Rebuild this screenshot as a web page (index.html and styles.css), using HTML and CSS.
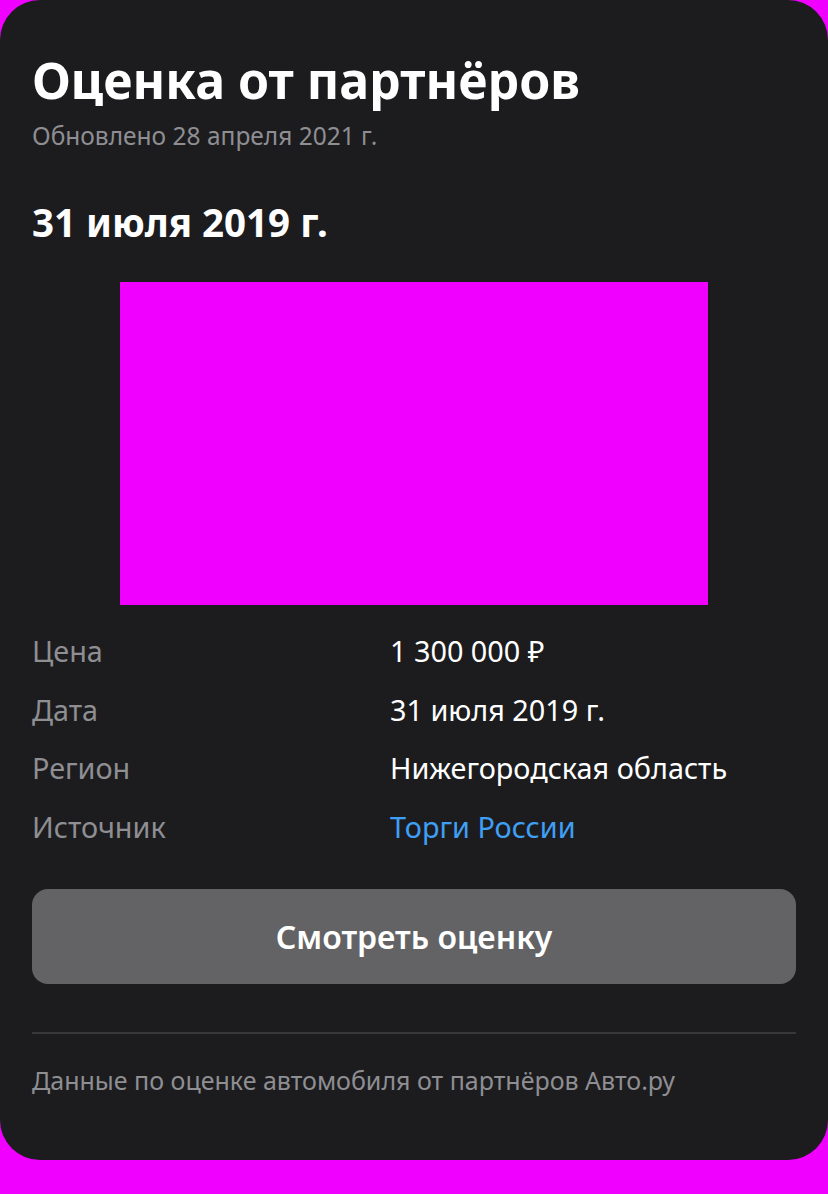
FILE: index.html
```html
<!DOCTYPE html>
<html lang="ru">
<head>
<meta charset="utf-8">
<link rel="stylesheet" href="styles.css">
</head>
<body>
<div class="card">
  <h1 class="title">Оценка от партнёров</h1>
  <div class="updated">Обновлено 28 апреля 2021 г.</div>
  <h2 class="date">31 июля 2019 г.</h2>
  <div class="picture-wrap"><div class="picture"></div></div>
  <div class="rows">
    <div class="row"><span class="label">Цена</span><span class="value">1 300 000 ₽</span></div>
    <div class="row"><span class="label">Дата</span><span class="value">31 июля 2019 г.</span></div>
    <div class="row"><span class="label">Регион</span><span class="value">Нижегородская область</span></div>
    <div class="row"><span class="label">Источник</span><span class="value link">Торги России</span></div>
  </div>
  <button class="btn">Смотреть оценку</button>
  <div class="divider"></div>
  <div class="footer">Данные по оценке автомобиля от партнёров Авто.ру</div>
</div>
</body>
</html>
```
FILE: styles.css
```css
html, body {
  margin: 0;
  padding: 0;
  background: #f000ff;
}
body {
  font-family: "Noto Sans", "Open Sans", sans-serif;
  width: 828px;
  height: 1194px;
}
.card {
  background: #1c1c1e;
  border-radius: 40px;
  height: 1160px;
  box-sizing: border-box;
  padding: 46px 32px 0 32px;
  color: #fff;
}
.title {
  margin: 0;
  font-size: 50px;
  font-weight: 700;
  line-height: 68px;
}
.updated {
  margin-top: 6px;
  font-size: 24.5px;
  line-height: 32px;
  color: #8e8e93;
}
.date {
  margin: 44px 0 0 0;
  font-size: 38.5px;
  font-weight: 700;
  line-height: 52px;
}
.picture-wrap {
  display: flex;
  justify-content: center;
  margin-top: 34px;
}
.picture {
  width: 588px;
  height: 323px;
  background: #f000ff;
}
.rows {
  margin-top: 17px;
  display: flex;
  flex-direction: column;
}
.row {
  display: grid;
  grid-template-columns: 358px 1fr;
  font-size: 28.8px;
  line-height: 58.5px;
}
.label {
  color: #8e8e93;
}
.value {
  color: #fff;
}
.value.link {
  color: #3f9ff5;
}
.btn {
  display: block;
  width: 100%;
  margin-top: 33px;
  height: 95px;
  border: none;
  border-radius: 16px;
  background: #636366;
  color: #fff;
  font-family: inherit;
  font-size: 32px;
  font-weight: 600;
}
.divider {
  margin-top: 48px;
  height: 2px;
  background: #38383a;
}
.footer {
  margin-top: 30px;
  font-size: 25px;
  line-height: 32px;
  color: #8e8e93;
}
```
